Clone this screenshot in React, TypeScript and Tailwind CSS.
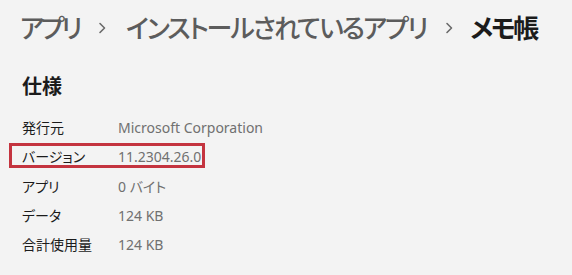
import React from "react";

const jp = "font-['Noto_Sans_CJK_JP','Noto_Sans',sans-serif]";

function Chevron({ right }: { right: string }) {
  return (
    <svg width="8" height="12" viewBox="0 0 8 12" className={`shrink-0 ml-[19px] mt-[2px] ${right}`} aria-hidden>
      <path d="M2 1.5 L6.5 6 L2 10.5" fill="none" stroke="#6b6b6b" strokeWidth="1.6" strokeLinecap="round" strokeLinejoin="round" />
    </svg>
  );
}

const rows: [string, string][] = [
  ["発行元", "Microsoft Corporation"],
  ["バージョン", "11.2304.26.0"],
  ["アプリ", "0 バイト"],
  ["データ", "124 KB"],
  ["合計使用量", "124 KB"],
];

export default function App() {
  return (
    <div className={`w-[572px] h-[275px] bg-[#f3f3f3] overflow-hidden pl-[20px] ${jp}`}>
      <div className="flex items-center whitespace-nowrap h-[40px] mt-[7px] text-[26px] leading-[40px] [font-feature-settings:'palt'] tracking-[-2px]">
        <span className="shrink-0 text-[#5c5c5c] font-medium tracking-[-3.5px]">アプリ</span>
        <Chevron right="mr-[20px]" />
        <span className="shrink-0 text-[#5c5c5c] font-medium">インストールされているアプリ</span>
        <Chevron right="mr-[17px]" />
        <span className="shrink-0 text-[#1b1b1b] font-bold tracking-[-2.5px]">メモ帳</span>
      </div>
      <div className="mt-[25px] pl-[2px] text-[20px] leading-[28px] font-bold text-[#1b1b1b]">仕様</div>
      <div className="mt-[13px] pl-[2px] flex flex-col">
        {rows.map(([k, v], i) => (
          <div key={k} className="relative flex items-center h-[29.3px] text-[14px]">
            {i === 1 && (
              <div className="absolute left-[-13px] top-[1px] w-[196px] h-[25px] border-[3px] border-[#c4343f]" />
            )}
            <span className="w-[96px] text-[#1b1b1b] [font-feature-settings:'palt']">{k}</span>
            <span className="text-[#707070] font-['Noto_Sans','Noto_Sans_CJK_JP',sans-serif] [font-feature-settings:'palt']">{v}</span>
          </div>
        ))}
      </div>
    </div>
  );
}
